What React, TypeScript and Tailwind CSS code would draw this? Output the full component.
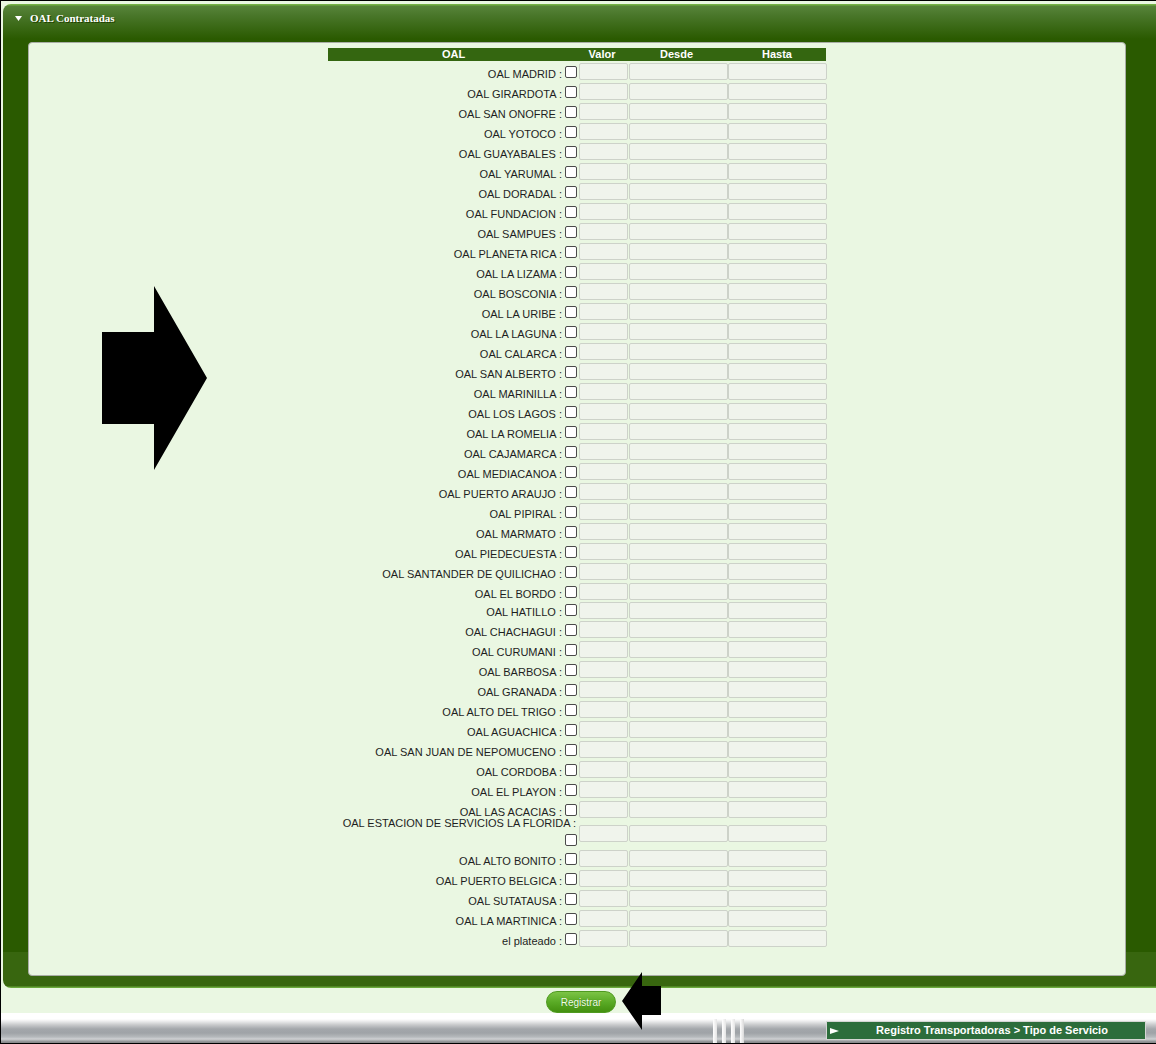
import React from "react";

const oals: string[] = [
  "OAL MADRID",
  "OAL GIRARDOTA",
  "OAL SAN ONOFRE",
  "OAL YOTOCO",
  "OAL GUAYABALES",
  "OAL YARUMAL",
  "OAL DORADAL",
  "OAL FUNDACION",
  "OAL SAMPUES",
  "OAL PLANETA RICA",
  "OAL LA LIZAMA",
  "OAL BOSCONIA",
  "OAL LA URIBE",
  "OAL LA LAGUNA",
  "OAL CALARCA",
  "OAL SAN ALBERTO",
  "OAL MARINILLA",
  "OAL LOS LAGOS",
  "OAL LA ROMELIA",
  "OAL CAJAMARCA",
  "OAL MEDIACANOA",
  "OAL PUERTO ARAUJO",
  "OAL PIPIRAL",
  "OAL MARMATO",
  "OAL PIEDECUESTA",
  "OAL SANTANDER DE QUILICHAO",
  "OAL EL BORDO",
  "OAL HATILLO",
  "OAL CHACHAGUI",
  "OAL CURUMANI",
  "OAL BARBOSA",
  "OAL GRANADA",
  "OAL ALTO DEL TRIGO",
  "OAL AGUACHICA",
  "OAL SAN JUAN DE NEPOMUCENO",
  "OAL CORDOBA",
  "OAL EL PLAYON",
  "OAL LAS ACACIAS",
  "OAL ESTACION DE SERVICIOS LA FLORIDA",
  "OAL ALTO BONITO",
  "OAL PUERTO BELGICA",
  "OAL SUTATAUSA",
  "OAL LA MARTINICA",
  "el plateado",
];

function Check({ className = "" }: { className?: string }) {
  return (
    <span
      className={`block h-[12px] w-[12px] shrink-0 rounded-[2px] border border-[#4a4a4a] bg-white ${className}`}
    />
  );
}

function Inputs() {
  return (
    <>
      <span className="block h-[17px] w-[49px] self-center rounded-[2px] border border-[#cdd2c9] bg-[#f0f4ec]" />
      <span className="ml-[1px] block h-[17px] w-[99px] self-center rounded-[2px] border border-[#cdd2c9] bg-[#f0f4ec]" />
      <span className="block h-[17px] w-[99px] self-center rounded-[2px] border border-[#cdd2c9] bg-[#f0f4ec]" />
    </>
  );
}

function OalRow({ name }: { name: string }) {
  // this one is too long for the label cell, so the checkbox drops to a second line
  if (name === "OAL ESTACION DE SERVICIOS LA FLORIDA") {
    return (
      <div className="flex h-[29px]">
        <div className="flex w-[251px] flex-col items-end">
          <span className="-mt-[2px] mr-[3px] whitespace-nowrap leading-[13px]">{name} :</span>
          <Check className="mr-[2px] mt-[4px]" />
        </div>
        <Inputs />
      </div>
    );
  }
  const h = name === "OAL HATILLO" ? "h-[18px]" : "h-[20px]";
  return (
    <div className={`flex ${h}`}>
      <div className="-ml-[1px] flex w-[252px] items-end justify-end">
        <span className="whitespace-nowrap leading-[13px]">{name} :</span>
        <Check className="mb-[3px] ml-[3px] mr-[2px]" />
      </div>
      <Inputs />
    </div>
  );
}

export default function App() {
  return (
    <div className="relative h-[1044px] w-[1156px] overflow-hidden border-b border-l border-t border-black bg-[#eaf7e2] font-['Liberation_Sans',Arial,sans-serif]">
      {/* panel */}
      <div className="ml-[2px] mt-[3px] h-[984px] w-[1154px] rounded-l-[8px] bg-[linear-gradient(to_bottom,#74b244_0px,#74b244_1px,#57843a_2px,#4b782c_10px,#2a5a00_35px,#2a5a00_948px,#38660f_948px,#38660f_982px,#6aa83c_983px)] pt-[8px]">
        <div className="flex h-[13px] items-center pl-[12px]">
          <svg width="7" height="5" viewBox="0 0 7 5" className="mr-[8px]">
            <polygon points="0,0 7,0 3.5,5" fill="#ffffff" />
          </svg>
          <span className="font-['Liberation_Serif',serif] text-[11px] font-bold leading-[13px] text-white [text-shadow:1px_1px_0_#1e4000]">
            OAL Contratadas
          </span>
        </div>

        <div className="ml-[25px] mt-[17px] h-[934px] w-[1098px] rounded-[4px] border border-[#a9ada6] bg-[#eaf7e2] pt-[5px] text-[11px] text-[#1e1e1e]">
          <div className="ml-[299px] w-[499px]">
            <div className="flex h-[13px] w-[498px] bg-[#346610] text-[11px] font-bold leading-[13px] text-white">
              <span className="w-[251px] text-center">OAL</span>
              <span className="w-[46px] text-center">Valor</span>
              <span className="w-[103px] text-center">Desde</span>
              <span className="w-[98px] text-center">Hasta</span>
            </div>
            {oals.map((name) => (
              <OalRow key={name} name={name} />
            ))}
          </div>
        </div>
      </div>

      {/* button area */}
      <div className="flex h-[25px] justify-center pt-[3px]">
        <button className="ml-[5px] h-[22px] w-[70px] rounded-full border border-[#4f9a20] bg-[linear-gradient(to_bottom,#7cc446,#5aab26_50%,#43900f)] text-[10px] text-[#f2ffe8] [text-shadow:0_0_1px_#2f6a08]">
          Registrar
        </button>
      </div>

      {/* bottom bar */}
      <div className="flex h-[30px] bg-[linear-gradient(to_bottom,#ffffff_0px,#ffffff_6px,#eeeff0_8px,#c6c8ca_12px,#a3a7ab_16px,#9fa3a7_20px,#b5b9bc_24px,#cfd1d3_26px,#8a8c8e_29px)]">
        <div className="ml-[712px] mt-[6px] flex h-[24px] gap-[5px]">
          <span className="block w-[4px] bg-[linear-gradient(to_right,#ffffff,#e4e4e4)]" />
          <span className="block w-[4px] bg-[linear-gradient(to_right,#ffffff,#e4e4e4)]" />
          <span className="block w-[4px] bg-[linear-gradient(to_right,#ffffff,#e4e4e4)]" />
          <span className="block w-[4px] bg-[linear-gradient(to_right,#ffffff,#d8d8d8)]" />
        </div>
        <div className="ml-[82px] mt-[8px] flex h-[19px] w-[320px] items-center border border-[#d4d6d4] bg-[#2c6d3b]">
          <svg width="9" height="6" viewBox="0 0 9 6" className="ml-[3px]">
            <polygon points="0,0 9,3 0,6" fill="#ffffff" />
          </svg>
          <span className="flex-1 text-center text-[11px] font-bold leading-[13px] text-white">
            Registro Transportadoras &gt; Tipo de Servicio
          </span>
        </div>
      </div>

      {/* annotation arrows */}
      <svg
        className="pointer-events-none absolute -left-[1px] -top-[1px]"
        width="1156"
        height="1044"
        viewBox="0 0 1156 1044"
      >
        <polygon points="102,332 154,332 154,286 207,378 154,470 154,424 102,424" fill="#000" />
        <polygon points="622,1001 642,972 642,986 661,986 661,1015 642,1015 642,1030" fill="#000" />
      </svg>
    </div>
  );
}
